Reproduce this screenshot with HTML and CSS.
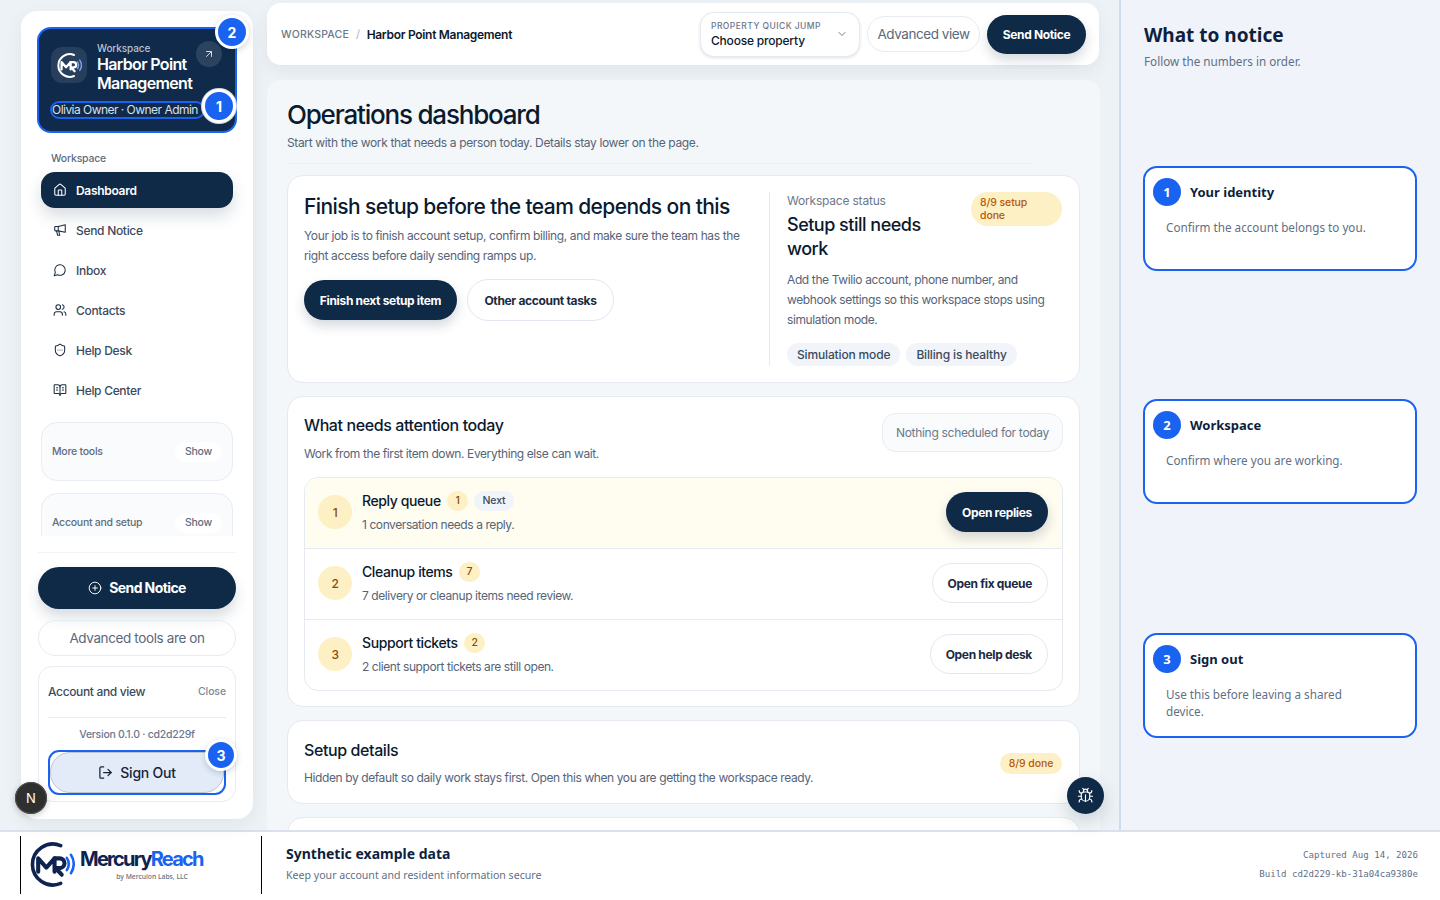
FILE: index.html
```html
<!DOCTYPE html>
<html lang="en">
<head>
<meta charset="UTF-8">
<title>Operations dashboard</title>
<link rel="stylesheet" href="styles.css">
</head>
<body>
<svg class="defs" width="0" height="0">
	<symbol id="i-home" viewBox="0 0 24 24"><path d="M15 21v-8a1 1 0 0 0-1-1h-4a1 1 0 0 0-1 1v8"/><path d="M3 10a2 2 0 0 1 .709-1.528l7-5.999a2 2 0 0 1 2.582 0l7 5.999A2 2 0 0 1 21 10v9a2 2 0 0 1-2 2H5a2 2 0 0 1-2-2z"/></symbol>
	<symbol id="i-horn" viewBox="0 0 24 24"><path d="M21 3v13L9 13.500H4a1 1 0 0 1-1-1V7a1 1 0 0 1 1-1h5z"/><path d="M9 6v7.500"/><path d="M6 14l2 7h3.500L10 14.500"/></symbol>
	<symbol id="i-chat" viewBox="0 0 24 24"><path d="M7.900 20A9 9 0 1 0 4 16.100L2 22Z"/></symbol>
	<symbol id="i-users" viewBox="0 0 24 24"><path d="M16 21v-2a4 4 0 0 0-4-4H6a4 4 0 0 0-4 4v2"/><circle cx="9" cy="7" r="4"/><path d="M22 21v-2a4 4 0 0 0-3-3.870"/><path d="M16 3.130a4 4 0 0 1 0 7.750"/></symbol>
	<symbol id="i-shield" viewBox="0 0 24 24"><path d="M20 13c0 5-3.500 7.500-7.660 8.950a1 1 0 0 1-.67-.01C7.500 20.500 4 18 4 13V6a1 1 0 0 1 1-1c2 0 4.500-1.200 6.240-2.720a1.170 1.170 0 0 1 1.520 0C14.510 3.810 17 5 19 5a1 1 0 0 1 1 1z"/><path d="M8.500 12h.01M12 12h.01M15.500 12h.01"/></symbol>
	<symbol id="i-book" viewBox="0 0 24 24"><path d="M12 7v14"/><path d="M3 18a1 1 0 0 1-1-1V4a1 1 0 0 1 1-1h5a4 4 0 0 1 4 4 4 4 0 0 1 4-4h5a1 1 0 0 1 1 1v13a1 1 0 0 1-1 1h-6a3 3 0 0 0-3 3 3 3 0 0 0-3-3z"/><path d="M16 8h2M16 12h2M6 8h2M6 12h2"/></symbol>
	<symbol id="i-out" viewBox="0 0 24 24"><path d="M9 3H5a2 2 0 0 0-2 2v14a2 2 0 0 0 2 2h4"/><path d="m16 17 5-5-5-5"/><path d="M21 12H9"/></symbol>
	<symbol id="i-bug" viewBox="0 0 24 24"><path d="m8 2 1.880 1.880"/><path d="M14.120 3.880 16 2"/><path d="M9 7.130v-1a3.003 3.003 0 1 1 6 0v1"/><path d="M12 20c-3.300 0-6-2.700-6-6v-3a4 4 0 0 1 4-4h4a4 4 0 0 1 4 4v3c0 3.300-2.700 6-6 6"/><path d="M12 20v-9"/><path d="M6.530 9C4.600 8.800 3 7.100 3 5"/><path d="M6 13H2"/><path d="M3 21c0-2.100 1.700-3.900 3.800-4"/><path d="M20.970 5c0 2.100-1.600 3.800-3.500 4"/><path d="M22 13h-4"/><path d="M17.200 17c2.100.1 3.800 1.900 3.800 4"/></symbol>
	<symbol id="i-mark" viewBox="0 0 44 44"><path class="mark-ring" d="M30 3.500A20 20 0 1 0 30 40.500"/><path class="mark-mr" d="M8 29V16l8 9 8-9v13"/><path class="mark-mr" d="M24 16h5a4.500 4.500 0 0 1 0 9.500h-4l6 6.500"/><path class="mark-wave" d="M36 15.500a11 11 0 0 1 0 12"/><path class="mark-wave" d="M40 12.500a16 16 0 0 1 0 18"/></symbol>
</svg>

<div class="app">
	<div class="stage">
		<aside class="sidebar">
			<div class="identity">
				<div class="identity-top">
					<div class="identity-logo"><svg class="logo-mini"><use href="#i-mark"/></svg></div>
					<div class="identity-text">
						<div class="identity-label">Workspace</div>
						<div class="identity-name">Harbor Point Management</div>
					</div>
					<div class="identity-arrow"><svg viewBox="0 0 24 24" class="ico ico-sm"><path d="M7 7h10v10"/><path d="M7 17 17 7"/></svg></div>
				</div>
				<div class="identity-user">Olivia Owner · Owner Admin</div>
				<span class="marker marker-user">1</span>
				<span class="marker marker-work">2</span>
			</div>

			<div class="side-scroll">
				<div class="side-label">Workspace</div>
				<a class="nav-item active"><svg class="ico"><use href="#i-home"/></svg>Dashboard</a>
				<a class="nav-item"><svg class="ico"><use href="#i-horn"/></svg>Send Notice</a>
				<a class="nav-item"><svg class="ico"><use href="#i-chat"/></svg>Inbox</a>
				<a class="nav-item"><svg class="ico"><use href="#i-users"/></svg>Contacts</a>
				<a class="nav-item"><svg class="ico"><use href="#i-shield"/></svg>Help Desk</a>
				<a class="nav-item"><svg class="ico"><use href="#i-book"/></svg>Help Center</a>
				<div class="fold"><span>More tools</span><b>Show</b></div>
				<div class="fold"><span>Account and setup</span><b>Show</b></div>
			</div>

			<div class="side-bottom">
				<a class="btn-send"><svg viewBox="0 0 24 24" class="ico"><circle cx="12" cy="12" r="10"/><path d="M8 12h8"/><path d="M12 8v8"/></svg>Send Notice</a>
				<a class="btn-advanced">Advanced tools are on</a>
				<div class="account">
					<div class="account-head"><span>Account and view</span><em>Close</em></div>
					<div class="version">Version 0.1.0 · cd2d229f</div>
					<div class="signout-ring">
						<a class="btn-signout"><svg class="ico ico-md"><use href="#i-out"/></svg>Sign Out</a>
					</div>
					<span class="marker marker-out">3</span>
				</div>
			</div>
			<span class="next-badge">N</span>
		</aside>

		<div class="column">
			<header class="topbar">
				<div class="crumbs"><span class="crumb-root">WORKSPACE</span><span class="crumb-sep">/</span><span class="crumb-here">Harbor Point Management</span></div>
				<div class="top-actions">
					<div class="quick">
						<div>
							<div class="quick-label">PROPERTY QUICK JUMP</div>
							<div class="quick-value">Choose property</div>
						</div>
						<svg viewBox="0 0 24 24" class="ico ico-sm"><path d="m6 9 6 6 6-6"/></svg>
					</div>
					<a class="btn-view">Advanced view</a>
					<a class="btn-dark btn-top">Send Notice</a>
				</div>
			</header>

			<main class="content">
				<h1>Operations dashboard</h1>
				<p class="lead">Start with the work that needs a person today. Details stay lower on the page.</p>

				<section class="card hero">
					<div class="hero-left">
						<h2>Finish setup before the team depends on this</h2>
						<p>Your job is to finish account setup, confirm billing, and make sure the team has the right access before daily sending ramps up.</p>
						<div class="hero-btns">
							<a class="btn-dark btn-hero">Finish next setup item</a>
							<a class="btn-light btn-tasks">Other account tasks</a>
						</div>
					</div>
					<div class="hero-right">
						<div class="status-top">
							<div>
								<div class="status-label">Workspace status</div>
								<h3>Setup still needs work</h3>
							</div>
							<span class="status-badge">8/9 setup done</span>
						</div>
						<p>Add the Twilio account, phone number, and webhook settings so this workspace stops using simulation mode.</p>
						<div class="chips"><span>Simulation mode</span><span>Billing is healthy</span></div>
					</div>
				</section>

				<section class="card attention">
					<div class="attention-head">
						<div>
							<h4>What needs attention today</h4>
							<p>Work from the first item down. Everything else can wait.</p>
						</div>
						<span class="schedule">Nothing scheduled for today</span>
					</div>
					<div class="queue">
						<div class="queue-row first">
							<span class="num">1</span>
							<div class="queue-text">
								<div class="queue-title">Reply queue <span class="count">1</span><span class="next">Next</span></div>
								<div class="queue-desc">1 conversation needs a reply.</div>
							</div>
							<a class="btn-dark btn-row">Open replies</a>
						</div>
						<div class="queue-row">
							<span class="num">2</span>
							<div class="queue-text">
								<div class="queue-title">Cleanup items <span class="count">7</span></div>
								<div class="queue-desc">7 delivery or cleanup items need review.</div>
							</div>
							<a class="btn-light btn-row">Open fix queue</a>
						</div>
						<div class="queue-row">
							<span class="num">3</span>
							<div class="queue-text">
								<div class="queue-title">Support tickets <span class="count">2</span></div>
								<div class="queue-desc">2 client support tickets are still open.</div>
							</div>
							<a class="btn-light btn-row">Open help desk</a>
						</div>
					</div>
				</section>

				<section class="card details">
					<div>
						<h4>Setup details</h4>
						<p>Hidden by default so daily work stays first. Open this when you are getting the workspace ready.</p>
					</div>
					<span class="done-badge">8/9 done</span>
				</section>
				<section class="card stub"></section>
			</main>
			<a class="bug"><svg class="ico ico-bug"><use href="#i-bug"/></svg></a>
		</div>
	</div>

	<aside class="notes">
		<h5>What to notice</h5>
		<p class="notes-sub">Follow the numbers in order.</p>
		<div class="note">
			<div class="note-head"><span class="note-num">1</span>Your identity</div>
			<p>Confirm the account belongs to you.</p>
		</div>
		<div class="note">
			<div class="note-head"><span class="note-num">2</span>Workspace</div>
			<p>Confirm where you are working.</p>
		</div>
		<div class="note">
			<div class="note-head"><span class="note-num">3</span>Sign out</div>
			<p>Use this before leaving a shared device.</p>
		</div>
	</aside>
</div>

<footer class="footer">
	<div class="brand">
		<svg class="logo"><use href="#i-mark"/></svg>
		<div class="brand-text">
			<div class="brand-name">Mercury<span>Reach</span></div>
			<div class="brand-by">by Mercuion Labs, LLC</div>
		</div>
	</div>
	<div class="foot-info">
		<strong>Synthetic example data</strong>
		<span>Keep your account and resident information secure</span>
	</div>
	<div class="foot-meta">
		<div>Captured Aug 14, 2026</div>
		<div>Build cd2d229-kb-31a04ca9380e</div>
	</div>
</footer>
</body>
</html>
```

FILE: styles.css
```css
*{
	box-sizing:border-box;
}
html,body{
	margin:0;
	height:900px;
	overflow:hidden;
}
body{
	font-family:"Inter","Noto Sans",sans-serif;
	font-size:12px;
	letter-spacing:-.38px;
	color:#0b1a2e;
	background:#fff;
}
h1,h2,h3,h4,h5,p{
	margin:0;
}
.defs{
	position:absolute;
}
.ico{
	width:14px;
	height:14px;
	flex:none;
	fill:none;
	stroke:currentColor;
	stroke-width:2;
	stroke-linecap:round;
	stroke-linejoin:round;
}
.ico-sm{
	width:12px;
	height:12px;
}
.ico-md{
	width:15px;
	height:15px;
}
.app{
	display:flex;
	height:830px;
}

/* left side */
.stage{
	width:1119px;
	display:flex;
	align-items:flex-start;
	padding:0 19px 0 21px;
	background:#edf2f6;
}
.sidebar{
	position:relative;
	width:232px;
	height:808px;
	margin-top:11px;
	padding:16px;
	display:flex;
	flex-direction:column;
	flex:none;
	background:#fff;
	border-radius:16px;
	box-shadow:0 6px 20px rgba(15,42,71,.06);
}
.identity{
	position:relative;
	height:106px;
	flex:none;
	padding:12px 13px 0 12px;
	color:#fff;
	background:#0f2a4a;
	border:2px solid #1a62f0;
	border-radius:14px;
}
.identity-top{
	display:flex;
	align-items:flex-start;
}
.identity-logo{
	width:36px;
	height:36px;
	margin-top:6px;
	flex:none;
	display:flex;
	align-items:center;
	justify-content:center;
	background:rgba(255,255,255,.1);
	border-radius:11px;
}
.logo-mini{
	width:25px;
	height:25px;
	color:#fff;
	--mark-wave:#7fa6f5;
}
.identity-text{
	width:100px;
	margin-left:10px;
}
.identity-label{
	margin-top:1px;
	font-size:10px;
	line-height:13px;
	font-weight:500;
	letter-spacing:-.1px;
	color:#b8c2cf;
}
.identity-name{
	font-size:16px;
	line-height:19px;
	font-weight:600;
	letter-spacing:-.65px;
}
.identity-arrow{
	width:26px;
	height:26px;
	margin-left:auto;
	display:flex;
	align-items:center;
	justify-content:center;
	color:#d3dae4;
	background:rgba(255,255,255,.12);
	border-radius:50%;
}
.identity-user{
	width:155px;
	height:18px;
	margin:8px 0 0 -1px;
	font-size:12px;
	line-height:14px;
	color:#d9e0ea;
	white-space:nowrap;
	letter-spacing:-.53px;
	border:2px solid #1a62f0;
	border-radius:9px;
}
.marker{
	position:absolute;
	width:34px;
	height:34px;
	display:flex;
	align-items:center;
	justify-content:center;
	font-size:14px;
	font-weight:700;
	letter-spacing:0;
	color:#fff;
	background:#1a62f0;
	border:3px solid #fff;
	border-radius:50%;
	box-shadow:0 2px 6px rgba(15,42,71,.2);
}
.marker-user{
	right:-1px;
	top:60px;
	box-shadow:0 0 0 1px #d5dbe4;
}
.marker-work{
	right:-14px;
	top:-14px;
}
.marker-out{
	width:32px;
	height:32px;
	right:-2px;
	top:72px;
}
.side-scroll{
	height:403px;
	margin:0 -16px 0 -16px;
	padding:19px 20px 0 20px;
	overflow:hidden;
	flex:none;
}
.side-label{
	margin-left:10px;
	margin-bottom:6px;
	font-size:10.500px;
	line-height:14px;
	font-weight:500;
	letter-spacing:-.2px;
	color:#5f6d80;
}
.nav-item{
	height:36px;
	margin-bottom:4px;
	padding-left:12px;
	display:flex;
	align-items:center;
	gap:9px;
	font-weight:500;
	letter-spacing:-.3px;
	color:#3b4a5e;
}
.nav-item .ico{
	color:#1c2d42;
	stroke-width:1.800;
}
.nav-item.active{
	color:#fff;
	font-weight:600;
	background:#0f2a47;
	border-radius:14px;
	box-shadow:0 8px 16px rgba(15,42,71,.16);
}
.nav-item.active .ico{
	color:#fff;
}
.fold{
	height:59px;
	margin-top:12px;
	padding:0 10px 0 10px;
	display:flex;
	align-items:center;
	justify-content:space-between;
	font-size:10.500px;
	font-weight:500;
	letter-spacing:-.25px;
	color:#5f6d80;
	background:#fafbfd;
	border:1px solid #e8ecf3;
	border-radius:16px;
}
.nav-item + .fold{
	margin-top:14px;
}
.fold b{
	width:47px;
	height:20px;
	line-height:20px;
	text-align:center;
	font-weight:500;
	background:#fff;
	border-radius:10px;
}
.side-bottom{
	margin:16px 0 0 1px;
	padding-top:14px;
	border-top:1px solid #f0f3f7;
	width:198px;
	flex:none;
}
.btn-send{
	height:42px;
	padding-bottom:1px;
	display:flex;
	align-items:center;
	justify-content:center;
	gap:7px;
	font-size:14px;
	font-weight:700;
	letter-spacing:-.6px;
	color:#fff;
	background:#0f2a47;
	border-radius:21px;
	box-shadow:0 8px 14px rgba(15,42,71,.16);
}
.btn-send .ico{
	stroke-width:1.600;
}
.btn-advanced{
	display:block;
	height:36px;
	margin-top:11px;
	line-height:34px;
	text-align:center;
	font-size:13.500px;
	color:#5b687b;
	letter-spacing:-.38px;
	border:1px solid #e7ebf2;
	border-radius:18px;
}
.account{
	position:relative;
	height:136px;
	margin-top:10px;
	padding:0 9px;
	background:#fff;
	border:1px solid #e8ecf3;
	border-radius:14px;
}
.account-head{
	height:51px;
	padding-bottom:2px;
	display:flex;
	align-items:center;
	justify-content:space-between;
	font-weight:500;
	letter-spacing:-.35px;
	color:#3b4a5e;
	border-bottom:1px solid #e8ecf3;
}
.account-head em{
	font-style:normal;
	font-size:10.500px;
	letter-spacing:-.1px;
	color:#7b889a;
}
.version{
	margin-top:8px;
	height:17px;
	line-height:17px;
	text-align:center;
	font-size:10.500px;
	font-weight:500;
	letter-spacing:-.25px;
	color:#6b788b;
}
.signout-ring{
	height:45px;
	margin-top:7px;
	background:#fff;
	border:2px solid #1a62f0;
	border-radius:11px;
}
.btn-signout{
	height:41px;
	display:flex;
	align-items:center;
	justify-content:center;
	gap:7px;
	font-size:14px;
	font-weight:500;
	letter-spacing:-.25px;
	color:#13243a;
	background:#e3ebf8;
	border:1px solid #bcc4d0;
	border-radius:20px;
}
.next-badge{
	position:absolute;
	left:-6px;
	top:771px;
	width:32px;
	height:32px;
	display:flex;
	align-items:center;
	justify-content:center;
	font-size:13px;
	font-weight:400;
	letter-spacing:0;
	color:#fff;
	background:#2f2f2f;
	border-radius:50%;
	box-shadow:0 2px 6px rgba(0,0,0,.2),0 0 0 1px #555 inset;
}

/* top bar and main */
.column{
	position:relative;
	width:833px;
	margin-left:14px;
	flex:none;
}
.topbar{
	width:832px;
	height:62px;
	margin-top:3px;
	padding:0 13px 0 14px;
	display:flex;
	align-items:center;
	justify-content:space-between;
	background:#fff;
	border-radius:14px;
	box-shadow:0 6px 16px rgba(15,42,71,.06);
}
.crumbs{
	display:flex;
	align-items:center;
}
.crumb-root{
	font-size:10.500px;
	font-weight:500;
	letter-spacing:.2px;
	color:#6b788b;
}
.crumb-sep{
	margin:0 7px;
	color:#a8b2c0;
	font-size:11px;
}
.crumb-here{
	font-weight:600;
	letter-spacing:-.3px;
	color:#0b1a2e;
}
.top-actions{
	display:flex;
	align-items:center;
	gap:7px;
}
.quick{
	width:160px;
	height:45px;
	padding:0 11px 0 10px;
	display:flex;
	align-items:center;
	justify-content:space-between;
	background:#fff;
	border:1px solid #e6eaf1;
	border-radius:14px;
	box-shadow:0 1px 3px rgba(15,42,71,.14);
}
.quick .ico{
	color:#5f6d80;
	stroke-width:1.800;
}
.quick-label{
	font-size:8.500px;
	line-height:12px;
	font-weight:500;
	letter-spacing:.45px;
	color:#6b788b;
}
.quick-value{
	line-height:17px;
	font-weight:500;
	letter-spacing:-.2px;
	color:#0b1a2e;
}
.btn-view{
	width:113px;
	height:36px;
	line-height:34px;
	text-align:center;
	font-size:13.500px;
	color:#5b687b;
	letter-spacing:-.45px;
	border:1px solid #e7ebf2;
	border-radius:18px;
}
.btn-dark,.btn-light{
	display:flex;
	align-items:center;
	justify-content:center;
	flex:none;
	font-weight:700;
	letter-spacing:-.33px;
	border-radius:20px;
}
.btn-dark{
	color:#fff;
	background:#0f2a47;
	box-shadow:0 6px 12px rgba(15,42,71,.18);
}
.btn-light{
	color:#1a2a3f;
	background:#fff;
	border:1px solid #e3e8f0;
}
.btn-top{
	width:99px;
	height:39px;
}
.content{
	height:750px;
	margin-top:15px;
	padding:19px 20px 0 20px;
	overflow:hidden;
	background:#f4f7f9;
	border-radius:14px 14px 0 0;
}
h1{
	font-size:26px;
	line-height:32px;
	font-weight:500;
	letter-spacing:-1.200px;
	color:#0b1a2e;
}
.lead{
	margin-top:2px;
	margin-right:47px;
	padding-bottom:10px;
	line-height:20px;
	letter-spacing:-.35px;
	color:#566478;
	border-bottom:1px solid #ecf0f4;
}
.card{
	width:793px;
	margin-top:12px;
	background:#fff;
	border:1px solid #e5e9f0;
	border-radius:16px;
}
.lead + .card{
	margin-top:11px;
}
.hero{
	height:208px;
	padding:16px 17px 16px 16px;
	display:flex;
}
.hero-left{
	width:465px;
	padding-top:1px;
	padding-right:20px;
	flex:none;
}
h2{
	font-size:21px;
	line-height:28px;
	font-weight:500;
	letter-spacing:-.6px;
}
.hero-left p{
	margin-top:5px;
	line-height:20px;
	color:#566478;
}
.hero-btns{
	margin-top:13px;
	display:flex;
	align-items:center;
	gap:10px;
}
.btn-hero{
	width:153px;
	height:40px;
}
.btn-tasks{
	width:147px;
	height:42px;
	border-radius:21px;
}
.hero-right{
	width:294px;
	padding-left:17px;
	border-left:1px solid #e5e9f0;
	flex:none;
}
.status-top{
	margin-right:1px;
	display:flex;
	justify-content:space-between;
	align-items:flex-start;
}
.status-label{
	margin-top:1px;
	line-height:16px;
	letter-spacing:-.2px;
	color:#6b788b;
}
h3{
	width:150px;
	margin-top:4px;
	font-size:18px;
	line-height:24px;
	font-weight:500;
	letter-spacing:-.5px;
}
.status-badge{
	width:91px;
	height:34px;
	padding:4px 9px;
	font-size:10.500px;
	line-height:13px;
	font-weight:500;
	letter-spacing:-.1px;
	color:#b8590c;
	background:#fdf0c4;
	border-radius:17px;
}
.hero-right p{
	margin-top:9px;
	max-width:265px;
	line-height:20px;
	color:#566478;
}
.chips{
	margin-top:13px;
	display:flex;
	gap:6px;
}
.chips span{
	height:23px;
	padding:0 10px;
	line-height:23px;
	font-weight:500;
	letter-spacing:-.15px;
	color:#3b4a5e;
	background:#f1f4f9;
	border-radius:12px;
}
.attention{
	height:311px;
	margin-top:13px;
	padding:16px 16px 0 16px;
}
.attention-head{
	height:64px;
	display:flex;
	align-items:flex-start;
	justify-content:space-between;
}
h4{
	font-size:16px;
	line-height:24px;
	font-weight:500;
	letter-spacing:-.4px;
}
.attention-head p{
	margin-top:8px;
	line-height:18px;
	letter-spacing:-.4px;
	color:#566478;
}
.details p{
	margin-top:7px;
	line-height:18px;
	letter-spacing:-.4px;
	color:#566478;
}
.schedule{
	width:181px;
	height:39px;
	line-height:37px;
	text-align:center;
	letter-spacing:-.3px;
	color:#6b788b;
	background:#fafbfd;
	border:1px solid #e8ecf3;
	border-radius:14px;
}
.queue{
	border:1px solid #e5e9f0;
	border-radius:14px;
	overflow:hidden;
}
.queue-row{
	height:71px;
	padding:0 14px 2px 13px;
	display:flex;
	align-items:center;
	border-top:1px solid #e5e9f0;
}
.queue-row:first-child{
	border-top:0;
	height:70px;
}
.queue-row.first{
	background:#fffcf0;
}
.num{
	width:34px;
	height:34px;
	display:flex;
	align-items:center;
	justify-content:center;
	flex:none;
	font-weight:500;
	color:#8a4b08;
	background:#fdf0c4;
	border-radius:50%;
}
.queue-text{
	flex:1;
	margin-left:10px;
}
.queue-title{
	display:flex;
	align-items:center;
	height:20px;
	font-size:14px;
	font-weight:500;
	letter-spacing:-.4px;
	color:#0b1a2e;
	white-space:pre;
}
.count{
	width:21px;
	height:20px;
	margin-left:3px;
	line-height:20px;
	text-align:center;
	font-size:10.500px;
	color:#8a4b08;
	background:#fdf0c4;
	border-radius:10px;
}
.next{
	width:40px;
	height:20px;
	margin-left:6px;
	line-height:20px;
	text-align:center;
	font-size:10.500px;
	letter-spacing:-.1px;
	color:#3b4a5e;
	background:#f1f4f9;
	border-radius:10px;
}
.queue-desc{
	margin-top:5px;
	line-height:18px;
	letter-spacing:-.42px;
	color:#566478;
}
.btn-row{
	height:40px;
	padding:0 16px;
	border-radius:20px;
}
.btn-row.btn-light{
	padding:0 15px;
}
.details{
	height:84px;
	margin-top:13px;
	padding:17px 16px 0 16px;
	display:flex;
	justify-content:space-between;
	align-items:flex-start;
}
.done-badge{
	margin:15px 1px 0 0;
	width:62px;
	height:21px;
	line-height:21px;
	text-align:center;
	font-size:10.500px;
	font-weight:500;
	letter-spacing:-.1px;
	color:#b8590c;
	background:#fdf0c4;
	border-radius:11px;
}
.stub{
	height:60px;
	margin-top:13px;
}
.bug{
	position:absolute;
	right:-4px;
	top:777px;
	width:37px;
	height:37px;
	display:flex;
	align-items:center;
	justify-content:center;
	color:#fff;
	background:#0f2a47;
	border-radius:50%;
	box-shadow:0 8px 18px rgba(15,42,71,.18);
}
.ico-bug{
	width:17px;
	height:17px;
	stroke-width:1.600;
}

/* right side */
.notes{
	width:321px;
	padding:22px 22px 0 22px;
	font-family:"Noto Sans",sans-serif;
	letter-spacing:0;
	background:#f0f4fa;
	border-left:2px solid #cfdcec;
}
h5{
	margin-left:1px;
	font-size:19px;
	line-height:26px;
	font-weight:700;
	color:#0f1f3d;
}
.notes-sub{
	margin:4px 0 0 1px;
	font-size:11.700px;
	line-height:18px;
	color:#5f6f85;
}
.note{
	width:274px;
	height:105px;
	margin-bottom:128.250px;
	padding:10px 8px 0 8px;
	background:#fff;
	border:2px solid #1a62f0;
	border-radius:14px;
}
.notes-sub + .note{
	margin-top:96px;
}
.note-head{
	display:flex;
	align-items:center;
	gap:9px;
	font-size:13px;
	font-weight:700;
	color:#0f1f3d;
}
.note-num{
	width:28px;
	height:28px;
	display:flex;
	align-items:center;
	justify-content:center;
	font-size:13px;
	color:#fff;
	background:#1a62f0;
	border-radius:50%;
}
.note p{
	margin:13px 0 0 13px;
	width:210px;
	font-size:11.700px;
	line-height:17px;
	color:#5f6f85;
}

/* footer */
.footer{
	height:70px;
	display:flex;
	align-items:center;
	background:#fff;
	border-top:2px solid #d9e1ec;
}
.brand{
	width:242px;
	height:58px;
	margin:-2px 0 0 20px;
	padding-left:9px;
	display:flex;
	align-items:center;
	gap:5px;
	border-left:1px solid #000;
	border-right:1px solid #000;
}
.logo{
	width:45px;
	height:45px;
	margin-top:-2px;
	color:#0f2350;
	--mark-wave:#1a62f0;
}
.mark-ring,.mark-mr,.mark-wave{
	fill:none;
	stroke-linecap:round;
	stroke-linejoin:round;
}
.mark-ring{
	stroke:currentColor;
	stroke-width:3.500;
}
.mark-mr{
	stroke:currentColor;
	stroke-width:4;
}
.mark-wave{
	stroke:var(--mark-wave);
	stroke-width:2.500;
}
.brand-text{
	margin-top:-2px;
}
.brand-name{
	font-size:20px;
	line-height:24px;
	font-weight:700;
	letter-spacing:-1.750px;
	color:#0f2350;
}
.brand-name span{
	color:#1a62f0;
}
.brand-by{
	margin-top:1px;
	padding-right:15px;
	text-align:right;
	font-size:6.750px;
	line-height:9px;
	font-family:"Noto Sans",sans-serif;
	font-weight:500;
	letter-spacing:0;
	color:#5f6f85;
}
.foot-info{
	margin:-4px 0 0 24px;
	font-family:"Noto Sans",sans-serif;
	letter-spacing:0;
}
.foot-info strong{
	display:block;
	font-size:14px;
	line-height:20px;
	font-weight:700;
	color:#0f1f3d;
}
.foot-info span{
	display:block;
	margin-top:2px;
	font-size:10.600px;
	line-height:18px;
	color:#5f6f85;
}
.foot-meta{
	margin:-2px 0 0 auto;
	padding-right:22px;
	text-align:right;
	font-family:"DejaVu Sans Mono",monospace;
	font-size:9.100px;
	line-height:19px;
	letter-spacing:0;
	color:#5f6f85;
}
```
